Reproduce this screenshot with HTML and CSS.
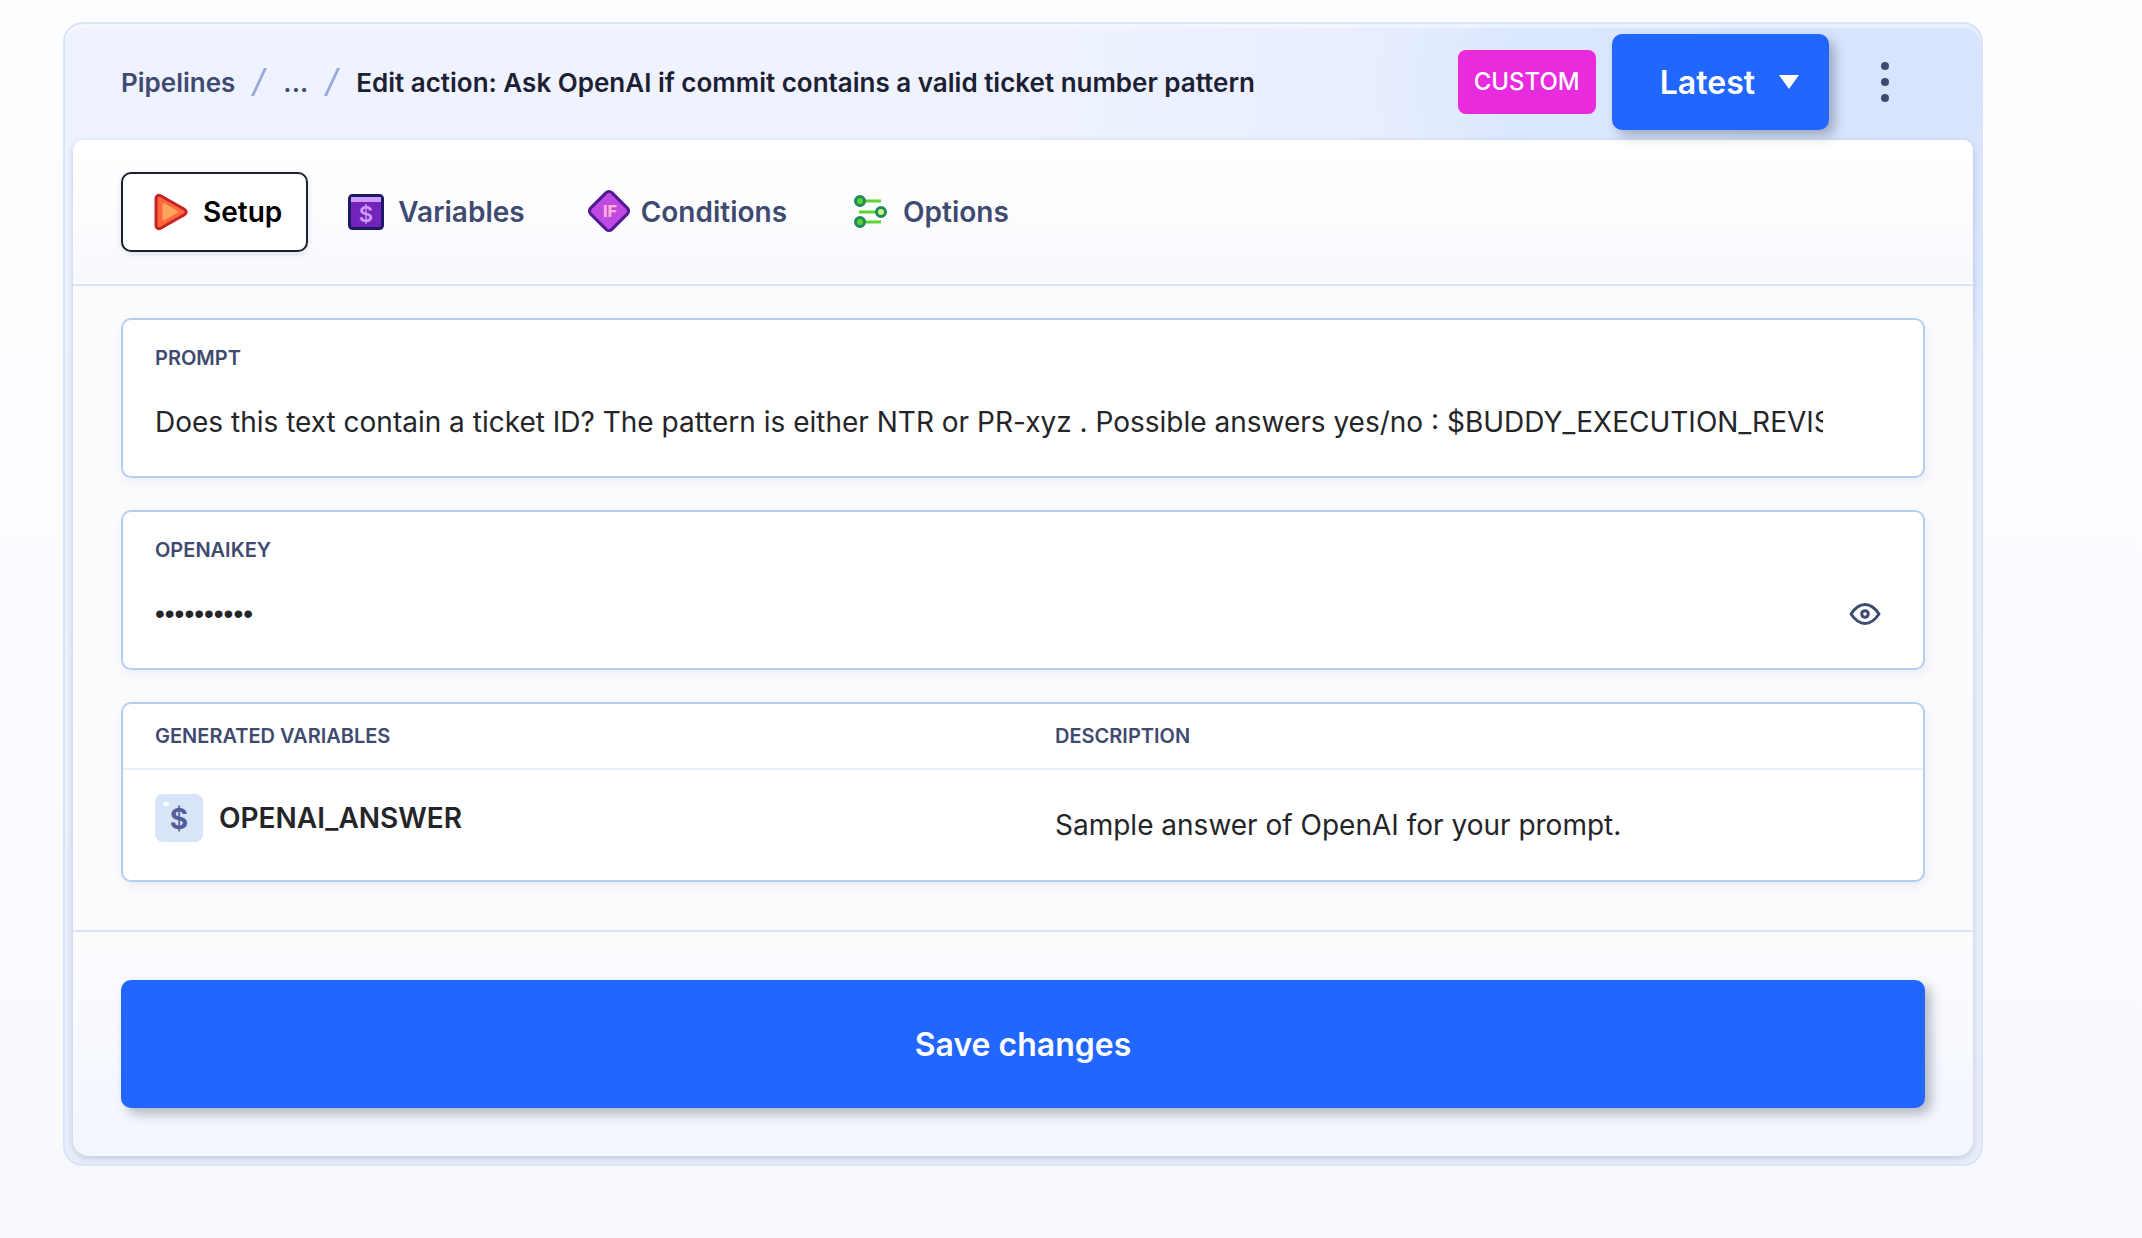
FILE: index.html
```html
<!DOCTYPE html>
<html lang="en">
<head>
<meta charset="utf-8">
<meta name="viewport" content="width=device-width, initial-scale=1">
<title>Edit action</title>
<link rel="stylesheet" href="styles.css">
</head>
<body>
<main class="window">
  <header class="topbar">
    <nav class="crumbs" aria-label="Breadcrumb">
      <a href="#">Pipelines</a>
      <svg class="slash" width="16" height="28" viewBox="0 0 16 28" aria-hidden="true"><path d="M13 0h3L3 28H0z"/></svg>
      <a href="#">...</a>
      <svg class="slash" width="16" height="28" viewBox="0 0 16 28" aria-hidden="true"><path d="M13 0h3L3 28H0z"/></svg>
      <span class="current">Edit action: Ask OpenAI if commit contains a valid ticket number pattern</span>
    </nav>
    <span class="badge">CUSTOM</span>
    <button class="version" type="button">Latest
      <svg width="20" height="14" viewBox="0 0 20 14" aria-hidden="true"><path d="M0 0h20L10 14z" fill="#fff"/></svg>
    </button>
    <button class="more" type="button" aria-label="More">
      <svg width="8" height="40" viewBox="0 0 8 40" fill="#3f4a70"><circle cx="4" cy="4" r="4"/><circle cx="4" cy="20" r="4"/><circle cx="4" cy="36" r="4"/></svg>
    </button>
  </header>

  <form class="panel">
    <div class="tabs">
      <button class="tab active" type="button">
        <svg class="tab-icon" viewBox="0 0 36 40" aria-hidden="true">
          <path d="M3 6.500c0-3 2.500-4 5-2.500l23 13c3 1.700 3 4.300 0 6L8 36c-2.500 1.500-5 .5-5-2.500z" fill="#ff6640" stroke="#c42424" stroke-width="3"/>
          <path d="M9.500 13q0-3 2.500-1.500l12 7q2 1.300 0 2.600l-12 7Q9.500 29.500 9.500 27z" fill="#ffa55c"/>
        </svg>
        Setup
      </button>
      <button class="tab" type="button">
        <svg class="tab-icon" viewBox="0 0 36 40" aria-hidden="true">
          <rect x="1.500" y="3.500" width="33" height="33" rx="3" fill="#7324bb" stroke="#1c1a66" stroke-width="3"/>
          <path d="M3 5h30v5H3z" fill="#d09cff"/>
          <text class="glyph-var" x="18" y="30">$</text>
        </svg>
        Variables
      </button>
      <button class="tab" type="button">
        <svg class="tab-icon" viewBox="0 0 36 40" aria-hidden="true">
          <rect x="3" y="4" width="30" height="30" rx="4" transform="rotate(45 18 19)" fill="#bf4ae3" stroke="#511a91" stroke-width="3"/>
          <text class="glyph-if" x="19" y="25">IF</text>
        </svg>
        Conditions
      </button>
      <button class="tab" type="button">
        <svg class="tab-icon" viewBox="0 0 36 40" aria-hidden="true">
          <path d="M7 9h21M6 20h20M7 30h21" stroke="#5fd32e" stroke-width="3" fill="none"/>
          <g fill="#5fd32e" stroke="#1f8a5c" stroke-width="3"><circle cx="7" cy="9" r="4.500"/><circle cx="28" cy="20" r="4.500" fill="#c8f57a"/><circle cx="7" cy="30" r="4.500"/></g>
        </svg>
        Options
      </button>
    </div>

    <div class="fields">
      <div class="box field">
        <label for="prompt">PROMPT</label>
        <input id="prompt" type="text" value="Does this text contain a ticket ID? The pattern is either NTR or PR-xyz . Possible answers yes/no : $BUDDY_EXECUTION_REVISION">
      </div>
      <div class="box field">
        <label for="key">OPENAIKEY</label>
        <div class="secret">
          <input id="key" type="password" value="0123456789">
          <button class="reveal" type="button" aria-label="Show value">
            <svg width="32" height="24" viewBox="0 0 32 24" fill="none" stroke="#3f4a70" stroke-width="3"><path d="M2 12c2-3 7-9.500 14-9.500S28 9 30 12c-2 3-7 9.500-14 9.500S4 15 2 12z" stroke-linejoin="round"/><circle cx="16" cy="12" r="3.300"/></svg>
          </button>
        </div>
      </div>
      <table class="box vars">
        <thead><tr><th scope="col">GENERATED VARIABLES</th><th scope="col">DESCRIPTION</th></tr></thead>
        <tbody><tr>
          <td><div class="var">
            <svg width="48" height="48" viewBox="0 0 48 48" aria-hidden="true"><rect width="48" height="48" rx="8" fill="#d8e4f8"/><rect x="8" y="8" width="6" height="4" rx="2" fill="#fff"/><text class="glyph-badge" x="24" y="35">$</text></svg>
            OPENAI_ANSWER
          </div></td>
          <td class="desc">Sample answer of OpenAI for your prompt.</td>
        </tr></tbody>
      </table>
    </div>

    <footer class="actions"><button class="save" type="submit">Save changes</button></footer>
  </form>
</main>
</body>
</html>
```
FILE: styles.css
```css
* { box-sizing: border-box; }

body {
  margin: 0;
  min-height: 100vh;
  padding: 22px 159px 64px 63px;
  background: linear-gradient(#fdfeff, #fbfcff 50%, #f7f9fd);
  font-family: Inter, "Liberation Sans", sans-serif;
  font-size: 28px;
  color: #242529;
}

button, input { font: inherit; color: inherit; border: 0; padding: 0; background: none; }
button { cursor: pointer; }
a { color: inherit; text-decoration: none; }
svg { display: block; flex: none; }

.window {
  border: 2px solid #d8e4f8;
  border-radius: 20px;
  padding: 0 8px 8px;
  background:
    radial-gradient(900px 460px at 96% 60px, #d8e4ff, #dce8ff 45%, #e8eeff 60%, #eff3ff00),
    linear-gradient(#eff3ff 116px, #ecf0fc 60%, #e9eefb);
  box-shadow: inset 0 4px #ffffff66;
}

.topbar {
  display: flex;
  align-items: center;
  height: 116px;
  padding: 0 84px 0 48px;
}

.crumbs {
  flex: 1;
  display: flex;
  align-items: center;
  gap: 16px;
  font-size: 26px;
  font-weight: 600;
  color: #3f4a70;
  white-space: nowrap;
}
.crumbs .current { color: #1c2033; }
.slash { fill: #95aadc; }

.badge {
  padding: 0 16px;
  border-radius: 8px;
  background: #e82cdd;
  color: #fff;
  font-size: 24px;
  font-weight: 500;
  line-height: 64px;
}

.version {
  display: flex;
  align-items: center;
  gap: 24px;
  height: 96px;
  margin-left: 16px;
  padding: 0 30px 0 48px;
  border-radius: 10px;
  background: #2066ff;
  color: #fff;
  font-size: 32px;
  font-weight: 600;
  box-shadow: 6px 6px 12px #1c20334d;
}

.more { margin-left: 52px; padding: 0; }

.panel {
  border-radius: 10px 10px 16px 16px;
  background: #fbfbfe;
  box-shadow: 0 2px 6px #3f4a7040;
}

.tabs {
  display: flex;
  gap: 8px;
  padding: 32px 48px;
  border-bottom: 2px solid #d8e4f8;
  border-radius: 10px 10px 0 0;
  background: linear-gradient(#fff, #fdfdff 50%, #f7f8fd);
  box-shadow: inset 0 -2px #fff;
}

.tab {
  display: flex;
  align-items: center;
  gap: 14px;
  height: 80px;
  padding: 0 24px 0 30px;
  border: 2px solid transparent;
  border-radius: 10px;
  font-weight: 600;
  color: #3f4a70;
}
.tab.active {
  border-color: #1c2033;
  background: #fff;
  color: #000;
  box-shadow: 0 2px 6px #3f4a7026;
}
.tab-icon { width: 36px; height: 40px; overflow: visible; }

.glyph-var { font-size: 22px; font-weight: 600; fill: #d09cff; text-anchor: middle; }
.glyph-if { font-size: 16px; font-weight: 800; fill: #ffb0d4; text-anchor: middle; }
.glyph-badge { font-size: 28px; font-weight: 700; fill: #525f96; text-anchor: middle; }

.fields {
  display: flex;
  flex-direction: column;
  gap: 32px;
  padding: 32px 48px 48px;
}

.box {
  border: 2px solid #b5cdf1;
  border-radius: 10px;
  background: #fff;
  box-shadow: 2px 4px 8px #3f4a7014;
}

.field {
  height: 160px;
  padding: 24px 32px;
}
.field label { display: block; }
.field label, .vars th {
  font-size: 20px;
  font-weight: 600;
  line-height: 28px;
  color: #3f4a70;
}
.field input {
  display: block;
  width: calc(100% - 68px);
  height: 44px;
  margin-top: 28px;
  outline: 0;
}
.field input[type="password"] { font-family: "Liberation Sans", Arial, sans-serif; }

.secret {
  display: flex;
  align-items: flex-end;
  justify-content: space-between;
}
.reveal { padding: 10px; }

.vars {
  width: 100%;
  table-layout: fixed;
  border-collapse: separate;
  border-spacing: 0;
}
.vars th {
  padding: 18px 32px;
  text-align: left;
  border-bottom: 2px solid #e8edfa;
}
.vars td { padding: 24px 32px; vertical-align: top; }
.vars .desc { padding: 32px; line-height: 46px; }
.var { display: flex; align-items: center; gap: 16px; font-weight: 600; }

.actions {
  padding: 48px;
  border-top: 2px solid #d8e4f8;
  border-radius: 0 0 16px 16px;
  background: linear-gradient(#fcfcfe, #f2f6ff);
}
.save {
  display: block;
  width: 100%;
  height: 128px;
  border-radius: 10px;
  background: #2066ff;
  color: #fff;
  font-size: 32px;
  font-weight: 600;
  box-shadow: 6px 6px 12px #1c20334d;
}
```
